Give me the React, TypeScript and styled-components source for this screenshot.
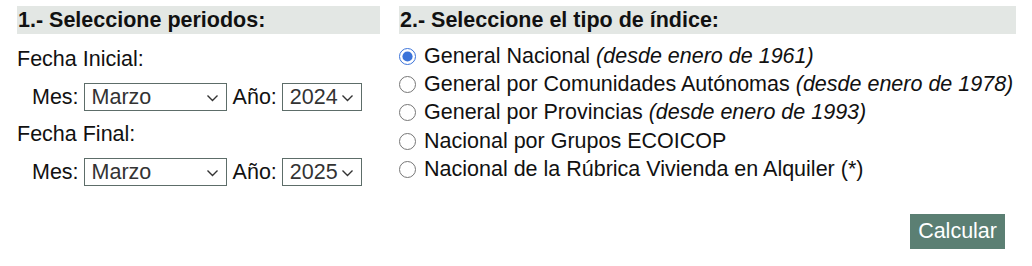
import React from "react";
import styled, { createGlobalStyle } from "styled-components";

const GlobalStyle = createGlobalStyle`
  body {
    margin: 0;
    background: #ffffff;
    font-family: "Liberation Sans", Arial, sans-serif;
    color: #111;
  }
`;

const Page = styled.div`
  display: grid;
  grid-template-columns: 363px 617px;
  column-gap: 19px;
  padding: 6px 16px 0 17px;
`;

const Column = styled.section`
  display: flex;
  flex-direction: column;
`;

const SectionTitle = styled.h2`
  margin: 0;
  height: 28px;
  line-height: 28px;
  padding-left: 1px;
  background: #e3e7e4;
  font-size: 21.5px;
  font-weight: bold;
  color: #111;
`;

const FieldLabel = styled.div<{ $top: number }>`
  margin-top: ${(p) => p.$top}px;
  font-size: 21.5px;
  line-height: 24px;
`;

const PickRow = styled.div<{ $top: number }>`
  display: flex;
  align-items: center;
  gap: 5px;
  margin-top: ${(p) => p.$top}px;
  padding-left: 15px;
  font-size: 21.5px;
`;

const SelectWrap = styled.div<{ $width: number }>`
  position: relative;
  width: ${(p) => p.$width}px;
  height: 28px;
  margin-right: 1px;
`;

const Select = styled.select`
  appearance: none;
  width: 100%;
  height: 100%;
  box-sizing: border-box;
  border: 1px solid #5d6d69;
  border-radius: 0;
  background: #fff;
  padding: 0 0 0 7px;
  font-family: "Liberation Sans", Arial, sans-serif;
  font-size: 21.5px;
  color: #333;
`;

const Chevron = styled.svg`
  position: absolute;
  right: 8px;
  top: 11px;
  pointer-events: none;
`;

const RadioList = styled.div`
  display: flex;
  flex-direction: column;
  margin-top: 8px;
`;

const RadioRow = styled.label`
  display: flex;
  align-items: center;
  height: 28.4px;
  font-size: 21.5px;
  color: #111;
`;

const Radio = styled.input`
  width: 17px;
  height: 17px;
  margin: 0 8px 0 0;
  accent-color: #3b73d9;
`;

const Note = styled.em`
  font-style: italic;
`;

const Actions = styled.div`
  display: flex;
  justify-content: flex-end;
  margin-top: 30px;
  padding-right: 11px;
`;

const Button = styled.button`
  height: 35px;
  padding: 0 8px;
  border: none;
  background: #5b7f73;
  color: #fff;
  font-family: "Liberation Sans", Arial, sans-serif;
  font-size: 21.5px;
`;

function Dropdown({ value, width }: { value: string; width: number }) {
  return (
    <SelectWrap $width={width}>
      <Select defaultValue={value}>
        <option>{value}</option>
      </Select>
      <Chevron width="13" height="8" viewBox="0 0 13 8">
        <path d="M1.5 1.5l5 5 5-5" fill="none" stroke="#333" strokeWidth="1.4" />
      </Chevron>
    </SelectWrap>
  );
}

const indices: { name: string; note?: string }[] = [
  { name: "General Nacional", note: "(desde enero de 1961)" },
  { name: "General por Comunidades Autónomas", note: "(desde enero de 1978)" },
  { name: "General por Provincias", note: "(desde enero de 1993)" },
  { name: "Nacional por Grupos ECOICOP" },
  { name: "Nacional de la Rúbrica Vivienda en Alquiler (*)" },
];

export default function App() {
  return (
    <>
      <GlobalStyle />
      <Page>
        <Column>
          <SectionTitle>1.- Seleccione periodos:</SectionTitle>
          <FieldLabel $top={13}>Fecha Inicial:</FieldLabel>
          <PickRow $top={12}>
            Mes: <Dropdown value="Marzo" width={143} /> Año: <Dropdown value="2024" width={80} />
          </PickRow>
          <FieldLabel $top={11}>Fecha Final:</FieldLabel>
          <PickRow $top={12}>
            Mes: <Dropdown value="Marzo" width={143} /> Año: <Dropdown value="2025" width={80} />
          </PickRow>
        </Column>
        <Column>
          <SectionTitle>2.- Seleccione el tipo de índice:</SectionTitle>
          <RadioList>
            {indices.map((item, i) => (
              <RadioRow key={item.name}>
                <Radio type="radio" name="indice" defaultChecked={i === 0} />
                {item.name}
                {item.note && (
                  <>
                    &nbsp;<Note>{item.note}</Note>
                  </>
                )}
              </RadioRow>
            ))}
          </RadioList>
          <Actions>
            <Button type="button">Calcular</Button>
          </Actions>
        </Column>
      </Page>
    </>
  );
}
